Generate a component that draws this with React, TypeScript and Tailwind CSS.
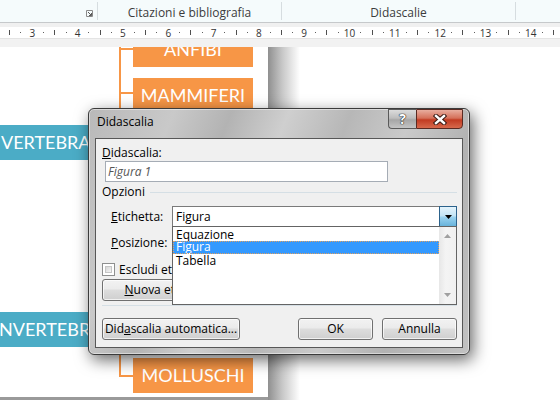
import { Fragment } from "react";

const ui = "font-['Open_Sans',sans-serif]";

function RulerCell({ children }: { children?: React.ReactNode }) {
  return <div className="flex w-[11.33px] shrink-0 items-center justify-center">{children}</div>;
}

function Tick() {
  return <div className="h-[5px] w-px bg-[#505050]" />;
}

function Dot() {
  return <div className="h-px w-px bg-[#606060]" />;
}

function Ruler() {
  const nums = [3, 4, 5, 6, 7, 8, 9, 10, 11, 12, 13, 14];
  return (
    <div className="flex h-[11px] items-center bg-white pl-[4px] text-[10px] leading-none text-[#333]">
      <RulerCell><Tick /></RulerCell>
      <RulerCell><Dot /></RulerCell>
      {nums.map((n) => (
        <Fragment key={n}>
          <RulerCell>{n}</RulerCell>
          <RulerCell><Dot /></RulerCell>
          <RulerCell><Tick /></RulerCell>
          <RulerCell><Dot /></RulerCell>
        </Fragment>
      ))}
    </div>
  );
}

function Ribbon() {
  return (
    <div className="flex h-[23px] border-b border-[#c6c9cb] bg-[#f5fbfc] text-[12px] text-[#3c3c3c]">
      <div className="flex w-[97px] items-end justify-end pb-[5px] pr-[4px]">
        <svg width="7" height="7" viewBox="0 0 7 7">
          <path d="M0.5 0.5h6v6h-6z" fill="none" stroke="#8a8a8a" />
          <path d="M2 2l3.5 3.5M5.5 3v2.5H3" fill="none" stroke="#5a5a5a" />
        </svg>
      </div>
      <div className="my-[2px] w-px bg-[#d6dde0]" />
      <div className="flex w-[183px] items-center justify-center pt-[3px]">Citazioni e bibliografia</div>
      <div className="my-[2px] w-px bg-[#d6dde0]" />
      <div className="flex w-[233px] items-center justify-center pt-[3px]">Didascalie</div>
      <div className="my-[2px] w-px bg-[#d6dde0]" />
    </div>
  );
}

function Node({ label, className }: { label: string; className: string }) {
  return (
    <div className={`absolute flex h-[35px] items-center font-['Lato',sans-serif] text-[18px] text-white ${className}`}>
      {label}
    </div>
  );
}

function Diagram() {
  return (
    <div className="relative h-[350px] w-[268px] overflow-hidden bg-white">
      <div className="absolute left-[119px] top-0 h-[200px] w-[2px] bg-[#f79646]" />
      <div className="absolute left-[119px] top-[1px] h-[2px] w-[14px] bg-[#f79646]" />
      <div className="absolute left-[119px] top-[45px] h-[2px] w-[14px] bg-[#f79646]" />
      <div className="absolute left-[119px] top-[250px] h-[80px] w-[2px] bg-[#f79646]" />
      <div className="absolute left-[119px] top-[328px] h-[2px] w-[14px] bg-[#f79646]" />
      <Node label="ANFIBI" className="left-[133px] top-[-15px] w-[120px] justify-center bg-[#f79646]" />
      <Node label="MAMMIFERI" className="left-[133px] top-[31px] w-[120px] justify-center bg-[#f79646]" />
      <Node label="VERTEBRATI" className="left-0 top-[78px] w-[110px] pl-[1px] bg-[#4bacc6]" />
      <Node label="INVERTEBRATI" className="left-[-6px] top-[265px] w-[116px] bg-[#4bacc6]" />
      <Node label="MOLLUSCHI" className="left-[133px] top-[311px] w-[120px] justify-center bg-[#f79646]" />
    </div>
  );
}

function WinButton({ children, className = "" }: { children: React.ReactNode; className?: string }) {
  return (
    <div
      className={`flex h-[22px] items-center justify-center rounded-[3px] border border-[#707070] bg-[linear-gradient(#f2f2f2_0%,#ebebeb_45%,#dddddd_50%,#cfcfcf_100%)] text-[12px] text-black shadow-[inset_0_0_0_1px_rgba(255,255,255,0.7)] ${className}`}
    >
      {children}
    </div>
  );
}

function Dialog() {
  return (
    <div
      className={`absolute left-[88px] top-[108px] flex h-[247px] w-[382px] flex-col rounded-[6px] border border-[#3b3b3b] bg-[linear-gradient(112deg,#b9b9b9_0%,#c9c9c9_18%,#b3b3b3_30%,#cfcfcf_42%,#b7b7b7_55%,#cacaca_68%,#b2b2b2_82%,#c2c2c2_100%)] px-[6px] pb-[6px] shadow-[inset_0_0_0_1px_rgba(255,255,255,0.45),3px_5px_16px_rgba(0,0,0,0.6)] ${ui}`}
    >
      <div className="flex h-[29px] items-start justify-between">
        <span className="pl-[2px] pt-[4px] text-[12px] text-black">Didascalia</span>
        <div className="flex h-[20px]">
          <div className="flex w-[28px] items-center justify-center rounded-bl-[4px] border border-r-0 border-[#5a5a5a] bg-[linear-gradient(#dcdcdc,#bdbdbd_45%,#a6a6a6_55%,#c4c4c4)] text-[14px] font-bold leading-none text-white [text-shadow:0_0_1px_#222,0_0_1px_#222,0_0_1px_#222]">
            ?
          </div>
          <div className="flex w-[47px] items-center justify-center rounded-br-[4px] border border-[#5a2a22] bg-[linear-gradient(#e8ad9f,#d5705a_45%,#c23b22_55%,#d7694c)]">
            <svg width="14" height="11" viewBox="0 0 14 11">
              <path d="M3 2l8 7M11 2l-8 7" stroke="#3a1a14" strokeWidth="4.4" strokeLinecap="square" />
              <path d="M3 2l8 7M11 2l-8 7" stroke="#fff" strokeWidth="2.4" strokeLinecap="square" />
            </svg>
          </div>
        </div>
      </div>

      <div className="relative flex flex-1 flex-col border border-[#575757] bg-[#f0f0f0] pl-[6px] pr-[5px] text-[12px] text-black">
        <div className="mt-[6px] h-[16px] leading-[16px]">
          <span className="underline">D</span>idascalia:
        </div>
        <div className="ml-[3px] flex h-[21px] w-[283px] items-center border border-[#a5acb5] bg-white pl-[2px] italic text-[#555]">
          Figura 1
        </div>
        <div className="mt-[2px] flex h-[16px] items-center gap-[5px] leading-[16px]">
          <span>Opzioni</span>
          <div className="h-px flex-1 bg-[#d5dfe5]" />
        </div>
        <div className="mt-[6px] flex h-[21px] items-center">
          <span className="w-[70px] pl-[9px]">
            <span className="underline">E</span>tichetta:
          </span>
          <div className="relative flex h-[21px] w-[285px] items-center border border-[#7a7a7a] bg-white pl-[3px]">
            Figura
            <div className="absolute right-[-1px] top-[-1px] flex h-[21px] w-[18px] items-center justify-center border border-[#2c628b] bg-[linear-gradient(#e5f4fc,#c4e5f6_45%,#98d1ef_55%,#68b3db)]">
              <svg width="7" height="4" viewBox="0 0 7 4" className="mt-[1px]">
                <path d="M0 0h7L3.5 4z" fill="#000" />
              </svg>
            </div>
          </div>
        </div>
        <div className="mt-[5px] flex h-[21px] items-center">
          <span className="pl-[9px]">
            <span className="underline">P</span>osizione:
          </span>
        </div>
        <div className="mt-[10px] flex h-[13px] items-center gap-[4px]">
          <div className="h-[13px] w-[13px] border border-[#8e8f8f] bg-white p-[2px]">
            <div className="h-full w-full border border-[#c6c6c6] bg-[linear-gradient(135deg,#d6d6d6,#f5f5f5)]" />
          </div>
          <span>Escludi etichetta dalla didascalia</span>
        </div>
        <WinButton className="mt-[3px] w-[143px]">
          <span>
            <span className="underline">N</span>uova etichetta...
          </span>
        </WinButton>
        <div className="mt-[4px] h-px bg-[#d5dfe5]" />
        <div className="mt-[12px] flex">
          <WinButton className="w-[138px]">
            <span>
              Did<span className="underline">a</span>scalia automatica...
            </span>
          </WinButton>
          <WinButton className="ml-[58px] w-[75px]">OK</WinButton>
          <WinButton className="ml-[9px] w-[75px]">Annulla</WinButton>
        </div>

        <div className="absolute left-[76px] top-[87px] flex h-[79px] w-[285px] border border-[#646464] bg-white">
          <div className="flex flex-1 flex-col pt-px">
            <div className="h-[13px] pl-[3px] leading-[13px]">Equazione</div>
            <div className="h-[13px] bg-[#3399ff] pl-[3px] leading-[12px] text-white outline-1 -outline-offset-1 outline-dotted outline-[#e0a060]">
              Figura
            </div>
            <div className="h-[13px] pl-[3px] leading-[13px]">Tabella</div>
          </div>
          <div className="flex w-[17px] flex-col items-center justify-between bg-[linear-gradient(90deg,#e7e7e7,#f4f4f4_40%,#f0f0f0)] py-[7px]">
            <svg width="7" height="4" viewBox="0 0 7 4">
              <path d="M3.5 0L7 4H0z" fill="#a0a0a0" />
            </svg>
            <svg width="7" height="4" viewBox="0 0 7 4">
              <path d="M0 0h7L3.5 4z" fill="#a0a0a0" />
            </svg>
          </div>
        </div>
      </div>
    </div>
  );
}

export default function App() {
  return (
    <div className={`relative h-[400px] w-[560px] overflow-hidden bg-white ${ui}`}>
      <Ribbon />
      <div className="h-[4px] bg-[#f0f0f0]" />
      <Ruler />
      <div className="h-[9px] border-t border-[#e4e4e4] bg-[#f2f2f2]" />
      <div className="flex h-[353px]">
        <div className="flex flex-col">
          <Diagram />
          <div className="h-[3px] bg-[#9a9a9a]" />
        </div>
        <div className="w-[32px] bg-[linear-gradient(90deg,#8f8f8f,#c8c8c8_45%,#ffffff)]" />
        <div className="flex-1 bg-white" />
      </div>
      <Dialog />
    </div>
  );
}
